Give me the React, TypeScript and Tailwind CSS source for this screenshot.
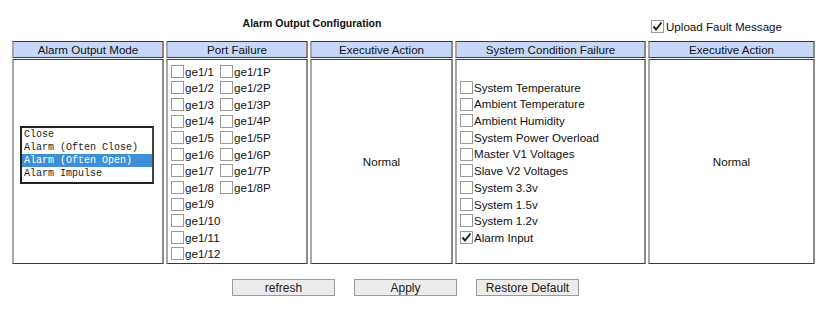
import { useState } from "react";

const ports = Array.from({ length: 12 }, (_, i) => i + 1);
const conditions = [
  "System Temperature",
  "Ambient Temperature",
  "Ambient Humidity",
  "System Power Overload",
  "Master V1 Voltages",
  "Slave V2 Voltages",
  "System 3.3v",
  "System 1.5v",
  "System 1.2v",
  "Alarm Input",
];
const modes = ["Close", "Alarm (Often Close)", "Alarm (Often Open)", "Alarm Impulse"];

function Box({ checked, onClick }: { checked?: boolean; onClick?: () => void }) {
  return (
    <span
      onClick={onClick}
      className="mr-[1px] inline-flex h-[13px] w-[13px] shrink-0 items-center justify-center border border-[#999] bg-white"
    >
      {checked && (
        <svg width="11" height="11" viewBox="0 0 11 11">
          <path d="M1.5 5.5 L4 8.5 L9.5 1.5" fill="none" stroke="#222" strokeWidth="2" />
        </svg>
      )}
    </span>
  );
}

const cell = "border-y border-y-[#3a3a3a] border-x-2 border-l-[#a8a8a8] border-r-[#8a8a8a] bg-white";
const head =
  "flex h-[17px] items-center justify-center border-y border-y-[#3a3a3a] border-x-2 border-l-[#a8a8a8] border-r-[#8a8a8a] bg-[#c6d8f8] text-[11.6px] leading-none text-[#111]";

export default function App() {
  const [upload, setUpload] = useState(true);
  const [mode, setMode] = useState(2);
  const [alarmInput, setAlarmInput] = useState(true);

  return (
    <div className="h-[314px] w-[832px] bg-white font-['Liberation_Sans',Arial,sans-serif] text-[11.6px] text-[#111]">
      <div className="relative h-[41px]">
        <div className="w-[624px] pt-[18px] text-center text-[10.5px] font-bold leading-none">
          Alarm Output Configuration
        </div>
        <label className="absolute left-[651px] top-[18px] flex items-center gap-[1px] text-[11.6px]">
          <Box checked={upload} onClick={() => setUpload(!upload)} />
          Upload Fault Message
        </label>
      </div>

      <div className="ml-[12px] grid grid-cols-[152px_142px_143px_191px_167px] gap-x-[2px] gap-y-[1px]">
        <div className={head}>Alarm Output Mode</div>
        <div className={head}>Port Failure</div>
        <div className={head}>Executive Action</div>
        <div className={head}>System Condition Failure</div>
        <div className={head}>Executive Action</div>

        <div className={`${cell} flex h-[205px] flex-col justify-center pl-[6px]`}>
          <div className="mb-[14px] h-[58px] w-[134px] border-2 border-[#222] border-r-[#444] font-['Liberation_Mono',monospace] text-[10px] leading-[13px]">
            {modes.map((m, i) => (
              <div
                key={m}
                onClick={() => setMode(i)}
                className={`pl-[2px] ${i === mode ? "bg-[#3d8fd6] text-white" : "text-[#222]"}`}
              >
                {m}
              </div>
            ))}
          </div>
        </div>

        <div className={`${cell} flex h-[205px] flex-col pl-[3px] pt-[3px]`}>
          {ports.map((p) => (
            <div key={p} className="flex h-[16.6px] items-center">
              <span className="flex w-[49px] items-center">
                <Box />
                ge1/{p}
              </span>
              {p <= 8 && (
                <span className="flex items-center">
                  <Box />
                  ge1/{p}P
                </span>
              )}
            </div>
          ))}
        </div>

        <div className={`${cell} flex h-[205px] items-center justify-center`}>Normal</div>

        <div className={`${cell} flex h-[205px] flex-col justify-center pl-[3px] pt-[2px]`}>
          {conditions.map((c) => (
            <div key={c} className="flex h-[16.7px] items-center">
              {c === "Alarm Input" ? (
                <Box checked={alarmInput} onClick={() => setAlarmInput(!alarmInput)} />
              ) : (
                <Box />
              )}
              {c}
            </div>
          ))}
        </div>

        <div className={`${cell} flex h-[205px] items-center justify-center`}>Normal</div>
      </div>

      <div className="mt-[15px] flex gap-[19px] pl-[232px]">
        {["refresh", "Apply", "Restore Default"].map((b) => (
          <button
            key={b}
            className="h-[17px] w-[103px] border border-[#9a9a9a] bg-[#ececec] text-[12px] leading-none text-[#222]"
          >
            {b}
          </button>
        ))}
      </div>
    </div>
  );
}
